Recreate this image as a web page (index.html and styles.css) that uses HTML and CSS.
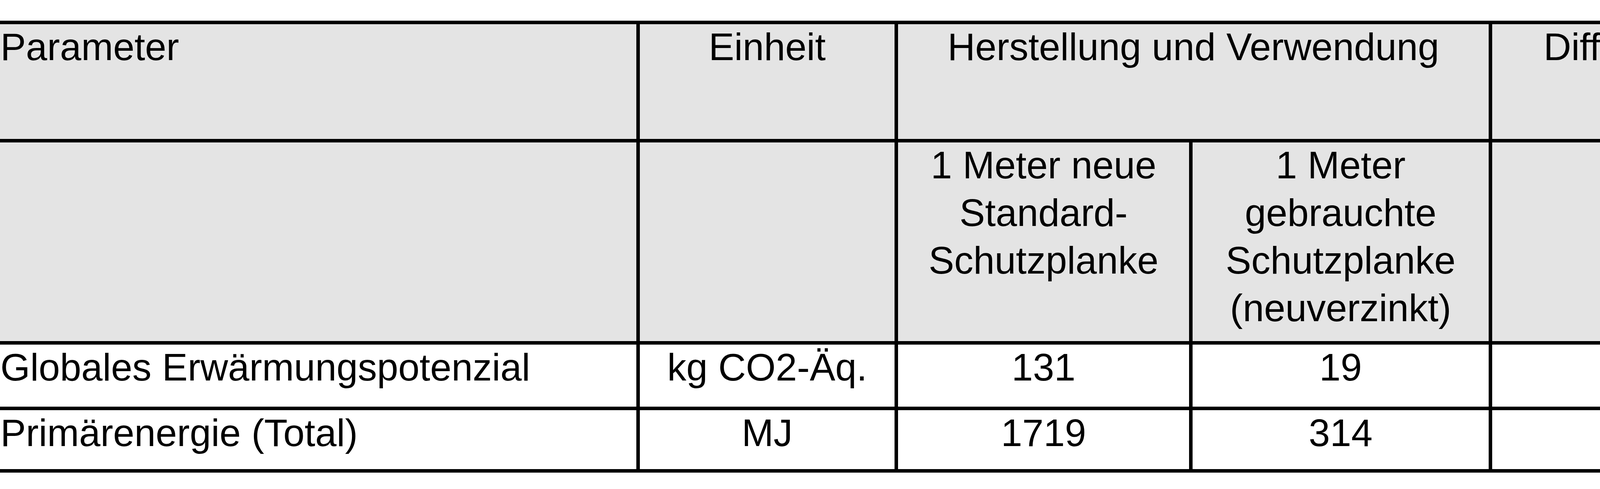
FILE: index.html
```html
<!DOCTYPE html>
<html lang="de">
<head>
<meta charset="utf-8">
<title>Schutzplanken Vergleich</title>
<link rel="stylesheet" href="styles.css">
</head>
<body>
<div class="viewport">
  <div class="grid">
    <div class="cell head left"><div class="txt">Parameter</div></div>
    <div class="cell head"><div class="txt">Einheit</div></div>
    <div class="cell head span2"><div class="txt">Herstellung und Verwendung</div></div>
    <div class="cell head last"><div class="txt">Differenz zwischen den beiden<br>Schutzplanken-Typen</div></div>

    <div class="cell head left"></div>
    <div class="cell head"></div>
    <div class="cell head"><div class="txt">1 Meter neue<br>Standard-<br>Schutzplanke</div></div>
    <div class="cell head"><div class="txt">1 Meter<br>gebrauchte<br>Schutzplanke<br>(neuverzinkt)</div></div>
    <div class="cell head last"><div class="txt">1 Meter Schutzplanke</div></div>

    <div class="cell left"><div class="txt">Globales Erwärmungspotenzial</div></div>
    <div class="cell"><div class="txt">kg CO2-Äq.</div></div>
    <div class="cell"><div class="txt">131</div></div>
    <div class="cell"><div class="txt">19</div></div>
    <div class="cell last"><div class="txt">112</div></div>

    <div class="cell left"><div class="txt">Primärenergie (Total)</div></div>
    <div class="cell"><div class="txt">MJ</div></div>
    <div class="cell"><div class="txt">1719</div></div>
    <div class="cell"><div class="txt">314</div></div>
    <div class="cell last"><div class="txt">1405</div></div>
  </div>
</div>
</body>
</html>
```
FILE: styles.css
```css
html, body {
  margin: 0;
  padding: 0;
  background: #ffffff;
}

body {
  font-family: "Liberation Sans", Arial, sans-serif;
  font-size: 98px;
  line-height: 122px;
  color: #000000;
}

.viewport {
  width: 100vw;
  height: 100vh;
  overflow: hidden;
}

.grid {
  margin-top: 53px;
  width: 5425px;
  display: grid;
  grid-template-columns: 1638px 661px 754px 767px 1605px;
  grid-template-rows: 303px 518px 168px 160px;
  border-top: 9px solid #000000;
}

.cell {
  box-sizing: border-box;
  border-right: 9px solid #000000;
  border-bottom: 9px solid #000000;
  text-align: center;
  overflow: hidden;
  white-space: nowrap;
}

.cell.head {
  background: #e4e4e4;
}

.cell.left {
  text-align: left;
  padding-left: 1px;
}

.cell.span2 {
  grid-column: span 2;
}

.txt {
  margin-top: -3px;
}
```
